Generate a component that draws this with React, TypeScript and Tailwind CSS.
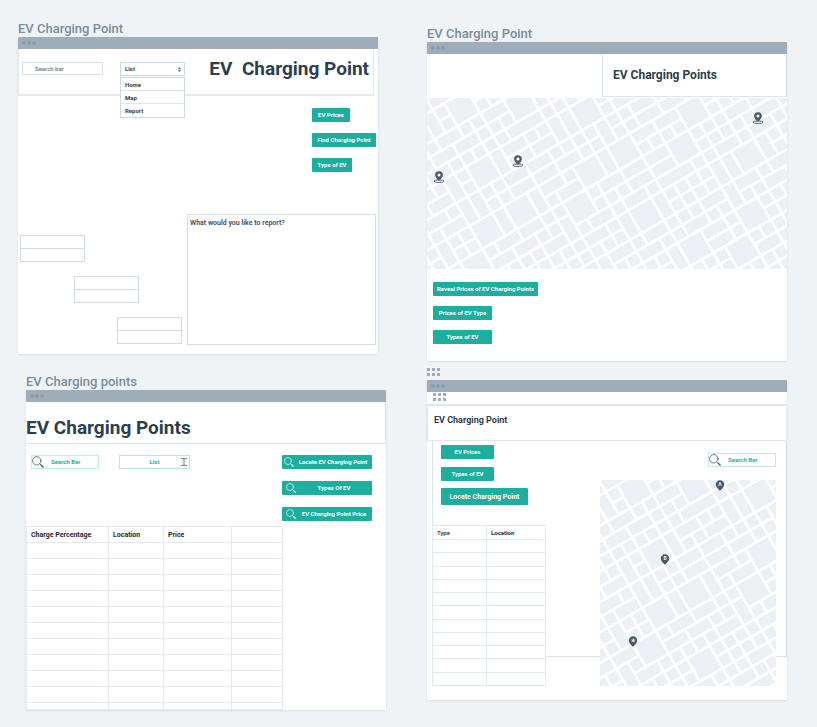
import type { ReactNode } from "react";

const CELL = 13.2;
const ROAD = 2.6;

// City blocks on the street grid: [column, row, columns wide, rows deep]
const NAMED_BLOCKS: number[][] = [
  [1, 1, 2, 2], [5, 3, 2, 2], [9, 6, 2, 2], [0, 6, 2, 2], [1, 10, 2, 2],
  [-2, 10, 2, 2], [7, 10, 2, 2], [5, 12, 2, 2], [-4, 12, 2, 2], [10, 10, 2, 2],
  [14, 12, 2, 2], [16, 10, 2, 2], [18, 15, 2, 2], [9, 15, 2, 2], [11, 19, 2, 2],
  [14, 21, 2, 2], [16, 19, 2, 2], [-1, 15, 2, 2],
  [-1, 1, 1, 2], [-2, 4, 2, 1], [0, 4, 2, 1], [3, 3, 2, 1], [4, 5, 3, 1],
  [5, 7, 2, 1], [-4, 7, 2, 1], [-4, 9, 2, 1], [-2, 6, 1, 2], [2, 6, 1, 2],
  [7, 6, 1, 2], [8, 6, 1, 2], [3, 10, 1, 2], [9, 10, 1, 2], [12, 10, 2, 1],
  [12, 14, 3, 1], [16, 15, 1, 2], [17, 15, 1, 2], [11, 15, 1, 2], [8, 15, 1, 2],
];

function buildBlocks(): number[][] {
  const taken = new Set<string>();
  const blocks: number[][] = [];
  const place = (b: number[]) => {
    for (let i = 0; i < b[2]; i++)
      for (let j = 0; j < b[3]; j++) taken.add(`${b[0] + i},${b[1] + j}`);
    blocks.push(b);
  };
  NAMED_BLOCKS.forEach(place);
  for (let r = -1; r < 28; r++) {
    for (let c = -9; c < 26; c++) {
      if (taken.has(`${c},${r}`)) continue;
      const roll = Math.abs((c * 31 + r * 17 + c * r * 7) % 11);
      const wide = roll < 3 && !taken.has(`${c + 1},${r}`);
      const deep = roll === 5 && !taken.has(`${c},${r + 1}`);
      place([c, r, wide ? 2 : 1, deep ? 2 : 1]);
    }
  }
  return blocks;
}

const BLOCKS = buildBlocks();

function StreetMap({ className, children }: { className: string; children: ReactNode }) {
  return (
    <div className={`relative overflow-hidden bg-white ${className}`}>
      <svg className="block h-full w-full" role="img" aria-label="Street map">
        <g transform="rotate(-30)" fill="#ECEFF4">
          {BLOCKS.map(([c, r, w, h]) => (
            <rect
              key={`${c},${r}`}
              x={c * CELL + ROAD / 2 - 1}
              y={r * CELL + ROAD / 2}
              width={w * CELL - ROAD}
              height={h * CELL - ROAD}
            />
          ))}
        </g>
      </svg>
      {children}
    </div>
  );
}

function BasePin({ className }: { className: string }) {
  return (
    <svg className={`absolute h-[12px] w-[12px] ${className}`} viewBox="0 0 12 12" aria-hidden="true">
      <ellipse cx="6" cy="10.200" rx="5" ry="1.200" fill="#fff" stroke="#4A5B6B" strokeWidth=".9" />
      <path d="M6 .2a3.900 3.900 0 0 0-3.900 3.900C2.100 6.700 6 10 6 10S9.900 6.700 9.900 4.100A3.900 3.900 0 0 0 6 .2Z" fill="#4A5B6B" />
      <circle cx="6" cy="4" r="1.500" fill="#fff" />
    </svg>
  );
}

function LetterPin({ className, letter }: { className: string; letter: string }) {
  return (
    <svg className={`absolute h-[11px] w-[10px] ${className}`} viewBox="0 0 10 11" aria-hidden="true">
      <path d="M5 .3A4.200 4.200 0 0 0 .8 4.500C.8 7.300 5 10.800 5 10.800S9.200 7.300 9.200 4.500A4.200 4.200 0 0 0 5 .3Z" fill="#4A5B6B" />
      <text x="5" y="6.300" fontSize="5" fontWeight="700" textAnchor="middle" fill="#E6EBF0">
        {letter}
      </text>
    </svg>
  );
}

function SearchIcon({ className }: { className: string }) {
  return (
    <svg className={`shrink-0 ${className}`} viewBox="0 0 12 12" fill="none" stroke="currentColor" strokeLinecap="round" aria-hidden="true">
      <circle cx="4.800" cy="4.800" r="4.200" strokeWidth=".8" />
      <path d="m7.900 7.900 1 1" strokeWidth=".8" />
      <path d="m9.200 9.200 1.900 1.900" strokeWidth="1.400" />
    </svg>
  );
}

function Grip({ className }: { className: string }) {
  return (
    <div className={`grid w-[13px] grid-cols-3 gap-[2px] ${className}`}>
      {[0, 1, 2, 3, 4, 5].map((n) => (
        <span key={n} className="h-[3px] w-[3px] bg-[#9EADBA]" />
      ))}
    </div>
  );
}

function Window({ className = "", children }: { className?: string; children: ReactNode }) {
  return (
    <section className={`bg-white shadow-[0_1px_2px_rgba(60,80,100,0.12)] ${className}`}>
      <div className="flex h-[12px] items-center gap-[1px] rounded-t-[1px] bg-[#9EADBA] pl-[4px]">
        <span className="h-[4px] w-[4px] rounded-full bg-[#8C9CAA]" />
        <span className="h-[4px] w-[4px] rounded-full bg-[#8C9CAA]" />
        <span className="h-[4px] w-[4px] rounded-full bg-[#8C9CAA]" />
      </div>
      {children}
    </section>
  );
}

function BoardTitle({ children }: { children: ReactNode }) {
  return <h2 className="h-[17px] text-[13px] leading-[17px] font-medium text-[#7B8C9A]">{children}</h2>;
}

function TealButton({ className = "", children }: { className?: string; children: ReactNode }) {
  return (
    <button
      type="button"
      className={`flex h-[14px] items-center justify-center rounded-[1px] bg-[#1CAE9E] text-[6px] leading-[8px] font-bold whitespace-nowrap text-white ${className}`}
    >
      {children}
    </button>
  );
}

function SearchField({ id }: { id: string }) {
  return (
    <div className="flex h-[14px] w-[68px] items-center border border-[#C3EAE4] text-[#4A5B6B]">
      <label htmlFor={id} aria-label="Search">
        <SearchIcon className="h-[12px] w-[12px]" />
      </label>
      <input
        id={id}
        type="search"
        placeholder="Search Bar"
        className="ml-[7px] w-full min-w-0 bg-transparent text-[6px] leading-[8px] font-bold outline-none placeholder:text-[#1CAE9E]"
      />
    </div>
  );
}

function StackedFields({ className, name }: { className: string; name: string }) {
  return (
    <div className={`w-[65px] ${className}`}>
      <input aria-label={`${name} first line`} className="block h-[14px] w-full border border-[#D3DBE1] outline-none" />
      <input aria-label={`${name} second line`} className="block h-[13px] w-full border border-t-0 border-[#D3DBE1] outline-none" />
    </div>
  );
}

function ReportBoard() {
  return (
    <Window className="mr-[8px] pb-[9px]">
      <header className="mr-[4px] flex h-[47px] items-start border-x border-b-2 border-[#E4E9EE] pt-[13px] pl-[3px]">
        <input
          aria-label="Search bar"
          placeholder="Search bar"
          className="h-[13px] w-[81px] border border-[#D7DFE7] pl-[12px] text-[6px] leading-[8px] font-medium outline-none placeholder:text-[#667685]"
        />
        <div className="relative ml-[17px] w-[65px]">
          <select
            aria-label="List"
            className="block h-[14px] w-full appearance-none border border-[#CFD9E1] bg-white pl-[4px] text-[6px] leading-[8px] font-bold text-[#2D3E4D] outline-none"
          >
            <option>List</option>
          </select>
          <svg className="pointer-events-none absolute top-[5px] right-[4px] h-[5px] w-[3px]" viewBox="0 0 3 5" fill="#4A5B6B" aria-hidden="true">
            <path d="M0 2 1.500 0 3 2ZM0 3 1.500 5 3 3Z" />
          </svg>
          <ul className="absolute top-[15px] left-0 w-full divide-y divide-[#DDE4EA] border border-[#CFD9E1] bg-white text-[6px] font-bold text-[#2D3E4D]">
            <li className="h-[13px] pl-[4px] leading-[13px]">Home</li>
            <li className="h-[13px] pl-[4px] leading-[13px]">Map</li>
            <li className="h-[13px] pl-[4px] leading-[13px]">Report</li>
          </ul>
        </div>
        <h1 className="-mt-[5px] mr-[4px] ml-auto text-[19px] leading-[24px] font-bold whitespace-pre text-[#2D3E4D]">
          EV  Charging Point
        </h1>
      </header>
      <div className="mt-[12px] ml-auto flex w-[66px] flex-col items-start gap-[11px]">
        <TealButton className="w-[38px]">EV Prices</TealButton>
        <TealButton className="w-[64px]">Find Charging Point</TealButton>
        <TealButton className="w-[40px]">Type of EV</TealButton>
      </div>
      <div className="mt-[42px] mr-[2px] flex">
        <div className="flex w-[169px] flex-col gap-[14px] pt-[21px]">
          <StackedFields className="ml-[2px]" name="Left" />
          <StackedFields className="ml-[56px]" name="Middle" />
          <StackedFields className="ml-[99px]" name="Right" />
        </div>
        <div className="flex h-[131px] flex-1 flex-col border border-[#D5DEE6] px-[2px] pt-[3px]">
          <label htmlFor="report" className="text-[7px] leading-[10px] font-semibold text-[#3C4C5A]">
            What would you like to report?
          </label>
          <textarea id="report" className="w-full flex-1 resize-none text-[7px] outline-none" />
        </div>
      </div>
    </Window>
  );
}

function PricesBoard() {
  const cell = "border border-[#E3E9EF] p-0 pl-[4px]";
  return (
    <Window className="ml-[8px]">
      <header className="flex h-[42px] items-end border-r border-b border-[#DCE4EC] pb-[3px]">
        <h1 className="text-[19px] leading-[24px] font-bold text-[#2D3E4D]">EV Charging Points</h1>
      </header>
      <div className="flex items-start pt-[11px] pr-[14px] pl-[5px]">
        <SearchField id="price-search" />
        <div className="relative ml-[20px] w-[71px]">
          <select
            aria-label="List"
            className="block h-[14px] w-full appearance-none border border-[#B9E3DD] bg-white text-center text-[6px] leading-[8px] font-bold text-[#1CAE9E] outline-none"
          >
            <option>List</option>
          </select>
          <svg className="pointer-events-none absolute top-[3px] right-[2px] h-[8px] w-[8px]" viewBox="0 0 8 8" fill="none" stroke="#5A6A78" strokeWidth=".8" aria-hidden="true">
            <path d="M1 .5h6M1 7.500h6M2.500 4h3M4 1.200v1.800M4 5v1.800" />
            <path d="m2.900 2.200 1.100-1.100 1.100 1.100M2.900 5.800 4 6.900l1.100-1.100" strokeWidth=".5" />
          </svg>
        </div>
        <div className="ml-auto flex w-[90px] flex-col gap-[12px]">
          <TealButton className="w-full pl-[2px]">
            <SearchIcon className="h-[10px] w-[10px]" />
            <span className="flex-1">Locate EV Charging Point</span>
          </TealButton>
          <TealButton className="w-full pl-[4px]">
            <SearchIcon className="h-[10px] w-[10px]" />
            <span className="flex-1">Types Of EV</span>
          </TealButton>
          <TealButton className="w-full pl-[4px]">
            <SearchIcon className="h-[10px] w-[10px]" />
            <span className="flex-1">EV Charging Point Price</span>
          </TealButton>
        </div>
      </div>
      <table className="mt-[5px] w-[257px] table-fixed border-collapse text-left text-[7px] leading-[10px] text-[#1E2730]">
        <colgroup>
          <col className="w-[82px]" />
          <col className="w-[55px]" />
          <col className="w-[68px]" />
          <col />
        </colgroup>
        <thead>
          <tr className="h-[16px]">
            <th className={cell}>Charge Percentage</th>
            <th className={cell}>Location</th>
            <th className={cell}>Price</th>
            <td className={cell} />
          </tr>
        </thead>
        <tbody>
          {Array.from({ length: 11 }, (_, n) => (
            <tr key={n} className="h-[16px] last:h-[7px]">
              <td className={cell} />
              <td className={cell} />
              <td className={cell} />
              <td className={cell} />
            </tr>
          ))}
        </tbody>
      </table>
    </Window>
  );
}

function MapBoard() {
  return (
    <Window className="pb-[17px]">
      <header className="flex h-[44px] justify-end pb-[1px]">
        <div className="flex w-[185px] items-center border-x border-b border-[#DCE4EC] pl-[10px]">
          <h1 className="text-[12px] leading-[16px] font-bold text-[#2D3E4D]">EV Charging Points</h1>
        </div>
      </header>
      <StreetMap className="h-[171px]">
        <BasePin className="top-[14px] left-[325px]" />
        <BasePin className="top-[57px] left-[85px]" />
        <BasePin className="top-[73px] left-[6px]" />
      </StreetMap>
      <div className="flex flex-col items-start gap-[10px] pt-[13px] pl-[6px]">
        <TealButton className="w-[105px]">Reveal Prices of EV Charging Points</TealButton>
        <TealButton className="w-[59px]">Prices of EV Type</TealButton>
        <TealButton className="w-[59px]">Types of EV</TealButton>
      </div>
    </Window>
  );
}

function LocateBoard() {
  const cell = "border border-[#E1E8EE] p-0 pl-[4px]";
  return (
    <Window className="pb-[14px]">
      <Grip className="mt-[1px] ml-[6px]" />
      <header className="mt-[3px] flex h-[37px] items-center border border-t-2 border-[#DFE6ED] pb-[6px] pl-[6px]">
        <h1 className="text-[9px] leading-[12px] font-bold text-[#2D3E4D]">EV Charging Point</h1>
      </header>
      <div className="ml-[5px] grid">
        <div className="col-start-1 row-start-1 mb-[29px] border-x border-b border-[#DCE3EE]" />
        <div className="col-start-1 row-start-1 flex justify-between">
          <div className="pt-[4px]">
            <div className="flex flex-col items-start pl-[9px]">
              <TealButton className="w-[53px]">EV Prices</TealButton>
              <TealButton className="mt-[8px] w-[53px]">Types of EV</TealButton>
              <button
                type="button"
                className="mt-[7px] h-[17px] w-[87px] rounded-[1px] bg-[#1CAE9E] text-[7px] leading-[10px] font-bold whitespace-nowrap text-white"
              >
                Locate Charging Point
              </button>
            </div>
            <table className="mt-[20px] h-[161px] w-[114px] table-fixed border-collapse bg-white text-left text-[6px] leading-[8px] text-[#1E2730]">
              <colgroup>
                <col className="w-[54px]" />
                <col />
              </colgroup>
              <thead>
                <tr className="h-[14px]">
                  <th className={`${cell} font-medium`}>Type</th>
                  <th className={cell}>Location</th>
                </tr>
              </thead>
              <tbody>
                {Array.from({ length: 11 }, (_, n) => (
                  <tr key={n}>
                    <td className={cell}>&nbsp;</td>
                    <td className={cell}>&nbsp;</td>
                  </tr>
                ))}
              </tbody>
            </table>
          </div>
          <div className="mr-[11px] flex w-[176px] flex-col items-end gap-[13px] pt-[12px]">
            <SearchField id="map-search" />
            <StreetMap className="h-[206px] w-full">
              <LetterPin className="top-0 left-[115px]" letter="A" />
              <LetterPin className="top-[74px] left-[60px]" letter="B" />
              <LetterPin className="top-[156px] left-[28px]" letter="★" />
            </StreetMap>
          </div>
        </div>
      </div>
    </Window>
  );
}

export default function App() {
  return (
    <main className="grid min-h-screen grid-cols-[368fr_360fr] items-start gap-x-[41px] bg-[#EFF3F6] pt-[20px] pr-[30px] pb-[17px] pl-[18px] font-['Roboto','Liberation_Sans',sans-serif]">
      <div>
        <BoardTitle>EV Charging Point</BoardTitle>
        <ReportBoard />
        <div className="mt-[19px] ml-[8px]">
          <BoardTitle>EV Charging points</BoardTitle>
        </div>
        <PricesBoard />
      </div>
      <div className="pt-[5px]">
        <BoardTitle>EV Charging Point</BoardTitle>
        <MapBoard />
        <Grip className="mt-[7px] mb-[4px]" />
        <LocateBoard />
      </div>
    </main>
  );
}
